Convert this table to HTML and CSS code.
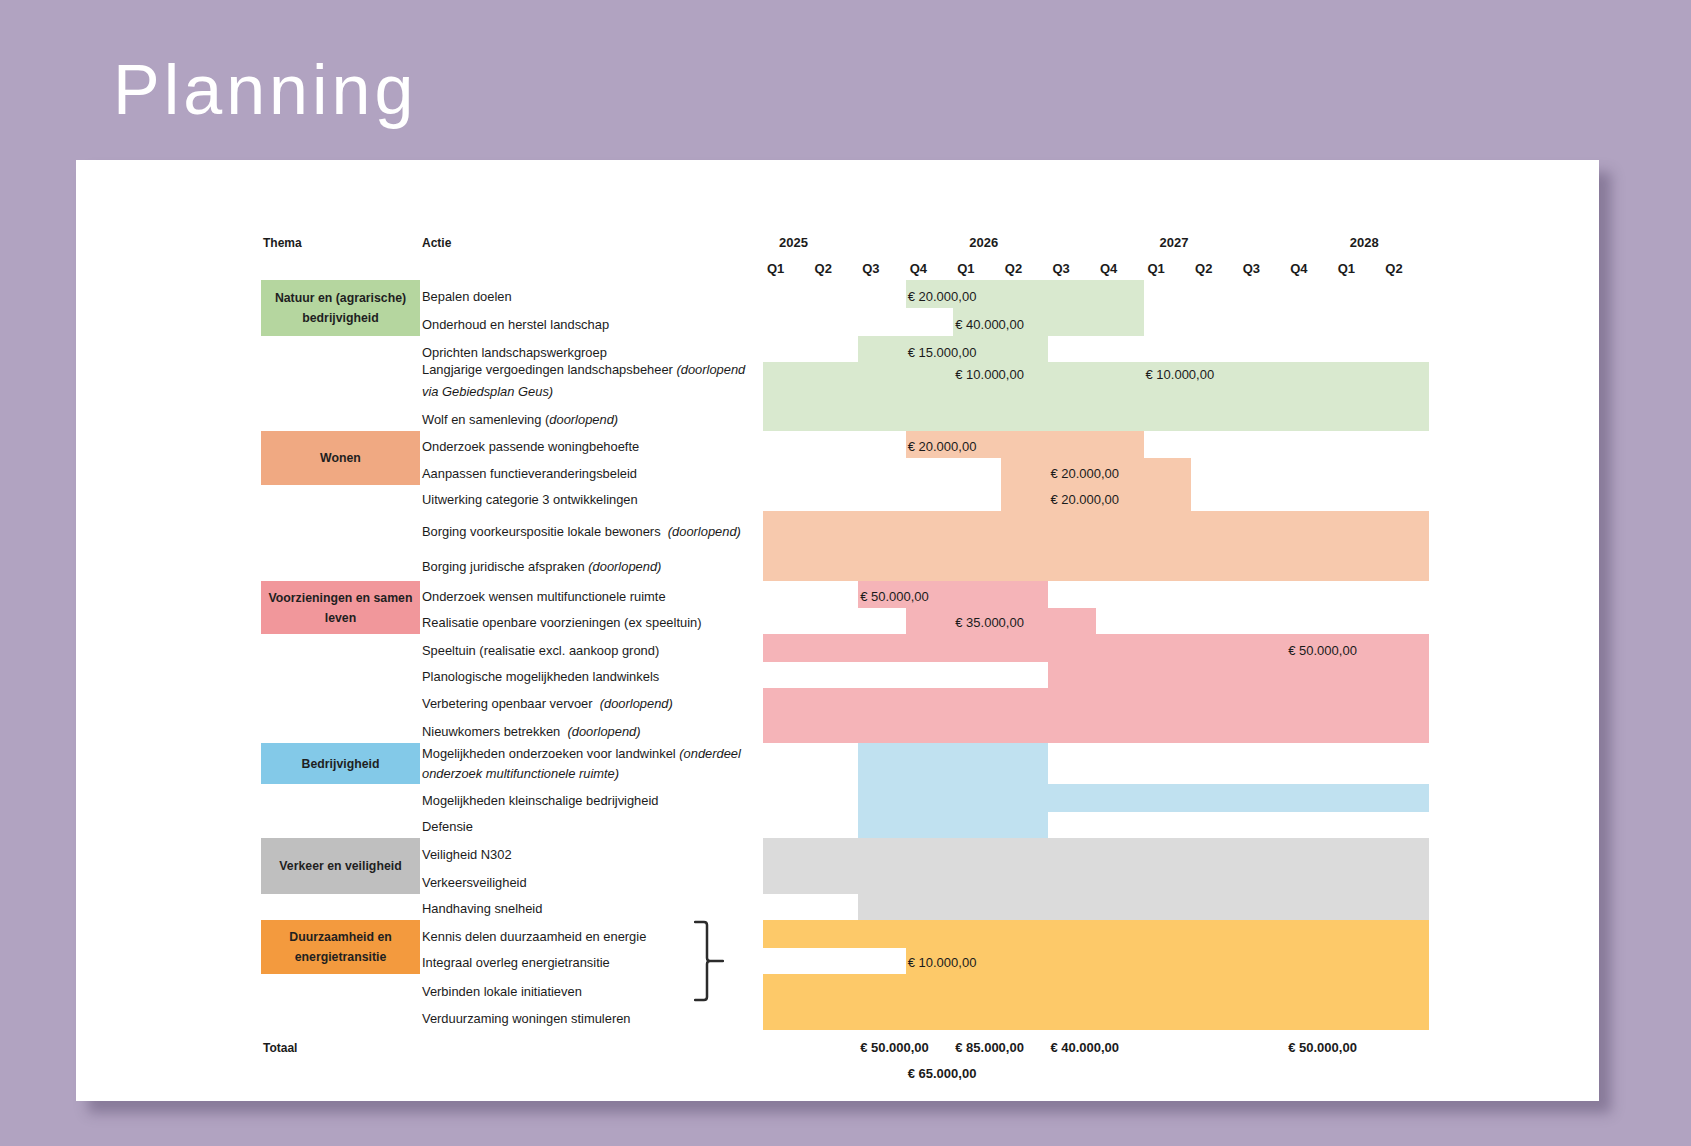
FILE: index.html
```html
<!DOCTYPE html>
<html lang="nl">
<head>
<meta charset="utf-8">
<title>Planning</title>
<link rel="stylesheet" href="styles.css">
</head>
<body>
<header class="title-bar">
  <h1 class="title">Planning</h1>
</header>
<main class="sheet">
  <div class="plan">
    <!-- headers -->
    <div class="cell hdr r1 c-theme">Thema</div>
    <div class="cell hdr r1 c-act">Actie</div>
    <div class="cell yr r1 q0">2025</div>
    <div class="cell yr r1 q4">2026</div>
    <div class="cell yr r1 q8">2027</div>
    <div class="cell yr r1 q12">2028</div>
    <div class="cell qt r2 q0">Q1</div>
    <div class="cell qt r2 q1">Q2</div>
    <div class="cell qt r2 q2">Q3</div>
    <div class="cell qt r2 q3">Q4</div>
    <div class="cell qt r2 q4">Q1</div>
    <div class="cell qt r2 q5">Q2</div>
    <div class="cell qt r2 q6">Q3</div>
    <div class="cell qt r2 q7">Q4</div>
    <div class="cell qt r2 q8">Q1</div>
    <div class="cell qt r2 q9">Q2</div>
    <div class="cell qt r2 q10">Q3</div>
    <div class="cell qt r2 q11">Q4</div>
    <div class="cell qt r2 q12">Q1</div>
    <div class="cell qt r2 q13">Q2</div>

    <!-- bars -->
    <div class="bar green r3 q3 w5"></div>
    <div class="bar green r4 q4 w4"></div>
    <div class="bar green r5 q2 w4"></div>
    <div class="bar green r6 h2 q0 w14"></div>
    <div class="bar peach r8 q3 w5"></div>
    <div class="bar peach r9 h2 q5 w4"></div>
    <div class="bar peach r11 h2 q0 w14"></div>
    <div class="bar pink r13 q2 w4"></div>
    <div class="bar pink r14 q3 w4"></div>
    <div class="bar pink r15 q0 w14"></div>
    <div class="bar pink r16 q6 w8"></div>
    <div class="bar pink r17 h2 q0 w14"></div>
    <div class="bar blue r19 h3 q2 w4"></div>
    <div class="bar blue r20 q6 w8"></div>
    <div class="bar gray r22 h2 q0 w14"></div>
    <div class="bar gray r24 q2 w12"></div>
    <div class="bar yellow r25 q0 w14"></div>
    <div class="bar yellow r26 q3 w11"></div>
    <div class="bar yellow r27 h2 q0 w14"></div>

    <!-- themes -->
    <div class="theme t-green r3 h2">Natuur en (agrarische) bedrijvigheid</div>
    <div class="theme t-wonen r8 h2">Wonen</div>
    <div class="theme t-pink r13 h2">Voorzieningen en samen leven</div>
    <div class="theme t-blue r19">Bedrijvigheid</div>
    <div class="theme t-gray r22 h2">Verkeer en veiligheid</div>
    <div class="theme t-orange r25 h2">Duurzaamheid en energietransitie</div>

    <!-- actions -->
    <div class="cell act r3"><span>Bepalen doelen</span></div>
    <div class="cell act r4"><span>Onderhoud en herstel landschap</span></div>
    <div class="cell act low r5"><span>Oprichten landschapswerkgroep</span></div>
    <div class="cell act act-wrap r6"><span>Langjarige vergoedingen landschapsbeheer <em>(doorlopend</em><br><em>via Gebiedsplan Geus)</em></span></div>
    <div class="cell act r7"><span>Wolf en samenleving (<em>doorlopend)</em></span></div>
    <div class="cell act r8"><span>Onderzoek passende woningbehoefte</span></div>
    <div class="cell act r9"><span>Aanpassen functieveranderingsbeleid</span></div>
    <div class="cell act r10"><span>Uitwerking categorie 3 ontwikkelingen</span></div>
    <div class="cell act r11"><span>Borging voorkeurspositie lokale bewoners&nbsp; <em>(doorlopend)</em></span></div>
    <div class="cell act act-high r12"><span>Borging juridische afspraken <em>(doorlopend)</em></span></div>
    <div class="cell act r13"><span>Onderzoek wensen multifunctionele ruimte</span></div>
    <div class="cell act r14"><span>Realisatie openbare voorzieningen (ex speeltuin)</span></div>
    <div class="cell act r15"><span>Speeltuin (realisatie excl. aankoop grond)</span></div>
    <div class="cell act r16"><span>Planologische mogelijkheden landwinkels</span></div>
    <div class="cell act r17"><span>Verbetering openbaar vervoer&nbsp; <em>(doorlopend)</em></span></div>
    <div class="cell act r18"><span>Nieuwkomers betrekken&nbsp; <em>(doorlopend)</em></span></div>
    <div class="cell act act-wrap2 r19"><span>Mogelijkheden onderzoeken voor landwinkel <em>(onderdeel</em><br><em>onderzoek multifunctionele ruimte)</em></span></div>
    <div class="cell act r20"><span>Mogelijkheden kleinschalige bedrijvigheid</span></div>
    <div class="cell act r21"><span>Defensie</span></div>
    <div class="cell act r22"><span>Veiligheid N302</span></div>
    <div class="cell act r23"><span>Verkeersveiligheid</span></div>
    <div class="cell act r24"><span>Handhaving snelheid</span></div>
    <div class="cell act r25"><span>Kennis delen duurzaamheid en energie</span></div>
    <div class="cell act r26"><span>Integraal overleg energietransitie</span></div>
    <div class="cell act r27"><span>Verbinden lokale initiatieven</span></div>
    <div class="cell act r28"><span>Verduurzaming woningen stimuleren</span></div>
    <div class="cell hdr r29 c-theme">Totaal</div>

    <!-- amounts -->
    <div class="cell amt r3 q3">€ 20.000,00</div>
    <div class="cell amt r4 q4">€ 40.000,00</div>
    <div class="cell amt low r5 q3">€ 15.000,00</div>
    <div class="cell amt amt-top r6 q4">€ 10.000,00</div>
    <div class="cell amt amt-top r6 q8">€ 10.000,00</div>
    <div class="cell amt r8 q3">€ 20.000,00</div>
    <div class="cell amt r9 q6">€ 20.000,00</div>
    <div class="cell amt r10 q6">€ 20.000,00</div>
    <div class="cell amt r13 q2">€ 50.000,00</div>
    <div class="cell amt r14 q4">€ 35.000,00</div>
    <div class="cell amt r15 q11">€ 50.000,00</div>
    <div class="cell amt r26 q3">€ 10.000,00</div>
    <div class="cell amt total r29 q2">€ 50.000,00</div>
    <div class="cell amt total r29 q4">€ 85.000,00</div>
    <div class="cell amt total r29 q6">€ 40.000,00</div>
    <div class="cell amt total r29 q11">€ 50.000,00</div>
    <div class="cell amt total r30 q3">€ 65.000,00</div>

    <!-- brace -->
    <div class="brace">
      <svg width="30" height="83" viewBox="0 0 30 83" aria-hidden="true">
        <path d="M1 2 L10 2 Q13 2 13 5 V38 Q13 41 16 41 H29 M16 41 Q13 41 13 44 V77 Q13 80 10 80 L1 80" fill="none" stroke="#2b2b2b" stroke-width="2.5" stroke-linecap="round" stroke-linejoin="round"/>
      </svg>
    </div>
  </div>
</main>
</body>
</html>
```

FILE: styles.css
```css
* { box-sizing: border-box; }

html, body {
  margin: 0;
  padding: 0;
}

body {
  width: 1691px;
  height: 1146px;
  overflow: hidden;
  background: #b1a3c1;
  font-family: "Liberation Sans", Arial, sans-serif;
  color: #1b1b1b;
}

.title-bar {
  height: 160px;
  padding: 55px 0 0 113px;
}

.title {
  margin: 0;
  font-family: "Liberation Sans", Arial, sans-serif;
  font-weight: 400;
  font-size: 70px;
  line-height: 70px;
  letter-spacing: 4px;
  color: #ffffff;
}

.sheet {
  display: block;
  margin-left: 76px;
  width: 1523px;
  height: 941px;
  background: #ffffff;
  box-shadow: 12px 12px 12px rgba(60, 45, 80, 0.35);
  padding: 69px 0 0 185px;
}

.plan {
  display: grid;
  grid-template-columns: 159px 343px repeat(14, 47.57px);
  grid-template-rows:
    28px 23px 28px 28px 26px 41px 28px 27px 27px 26px
    32px 38px 27px 26px 28px 26px 27px 28px 41px 28px
    26px 28px 28px 26px 28px 26px 29px 27px 29px 26px;
}

/* rows */
.r1 { grid-row-start: 1; }  .r2 { grid-row-start: 2; }  .r3 { grid-row-start: 3; }
.r4 { grid-row-start: 4; }  .r5 { grid-row-start: 5; }  .r6 { grid-row-start: 6; }
.r7 { grid-row-start: 7; }  .r8 { grid-row-start: 8; }  .r9 { grid-row-start: 9; }
.r10 { grid-row-start: 10; } .r11 { grid-row-start: 11; } .r12 { grid-row-start: 12; }
.r13 { grid-row-start: 13; } .r14 { grid-row-start: 14; } .r15 { grid-row-start: 15; }
.r16 { grid-row-start: 16; } .r17 { grid-row-start: 17; } .r18 { grid-row-start: 18; }
.r19 { grid-row-start: 19; } .r20 { grid-row-start: 20; } .r21 { grid-row-start: 21; }
.r22 { grid-row-start: 22; } .r23 { grid-row-start: 23; } .r24 { grid-row-start: 24; }
.r25 { grid-row-start: 25; } .r26 { grid-row-start: 26; } .r27 { grid-row-start: 27; }
.r28 { grid-row-start: 28; } .r29 { grid-row-start: 29; } .r30 { grid-row-start: 30; }
.h2 { grid-row-end: span 2; }
.h3 { grid-row-end: span 3; }

/* quarter columns */
.q0 { grid-column-start: 3; }  .q1 { grid-column-start: 4; }  .q2 { grid-column-start: 5; }
.q3 { grid-column-start: 6; }  .q4 { grid-column-start: 7; }  .q5 { grid-column-start: 8; }
.q6 { grid-column-start: 9; }  .q7 { grid-column-start: 10; } .q8 { grid-column-start: 11; }
.q9 { grid-column-start: 12; } .q10 { grid-column-start: 13; } .q11 { grid-column-start: 14; }
.q12 { grid-column-start: 15; } .q13 { grid-column-start: 16; }
.w4 { grid-column-end: span 4; }
.w5 { grid-column-end: span 5; }
.w8 { grid-column-end: span 8; }
.w11 { grid-column-end: span 11; }
.w12 { grid-column-end: span 12; }
.w14 { grid-column-end: span 14; }

.c-theme { grid-column: 1; }
.c-act { grid-column: 2; }

/* generic text cell */
.cell {
  display: flex;
  align-items: flex-end;
  padding-bottom: 2px;
  font-size: 12px;
  line-height: 18px;
  white-space: nowrap;
  min-width: 0;
}
.cell.low { padding-bottom: 0; }

.hdr {
  font-weight: 700;
  padding-left: 2px;
}
.r1.hdr { padding-bottom: 5px; }

.yr {
  font-weight: 700;
  font-size: 13px;
  padding-left: 16px;
  padding-bottom: 5px;
}

.qt {
  font-weight: 700;
  font-size: 13px;
  padding-left: 4px;
}

.act {
  grid-column: 2;
  padding-left: 2px;
  font-size: 12.9px;
}
.act em { font-style: italic; }

.act-wrap {
  line-height: 22px;
  padding-bottom: 0;
}
.act-wrap2 {
  line-height: 20px;
  padding-bottom: 0;
}
.act-high { padding-bottom: 5px; }

.amt {
  font-size: 13px;
  padding-left: 2px;
  overflow: visible;
}
.amt-top {
  align-items: flex-start;
  padding-top: 4px;
  padding-bottom: 0;
}
.total {
  font-weight: 700;
  font-size: 13px;
}

/* bars */
.bar { display: block; }
.green { background: #d9e9cf; }
.peach { background: #f7c9ad; }
.pink { background: #f5b4b8; }
.blue { background: #c0e1f0; }
.gray { background: #dbdbdb; }
.yellow { background: #fdc969; }

/* themes */
.theme {
  grid-column: 1;
  display: flex;
  align-items: center;
  justify-content: center;
  text-align: center;
  font-weight: 700;
  font-size: 12.3px;
  line-height: 20px;
  padding: 0 3px;
  color: #1f1f1f;
}
.t-green { background: #b5d69f; }
.t-wonen { background: #f0a982; }
.t-pink { background: #f1979b; }
.t-blue { background: #83c9e8; }
.t-gray { background: #bfbfbf; }
.t-orange { background: #f39a3e; }

/* brace */
.brace {
  grid-column: 2;
  grid-row: 25 / span 3;
  align-self: start;
  margin-left: 274px;
  width: 30px;
  height: 83px;
}
.brace svg { display: block; }
```
